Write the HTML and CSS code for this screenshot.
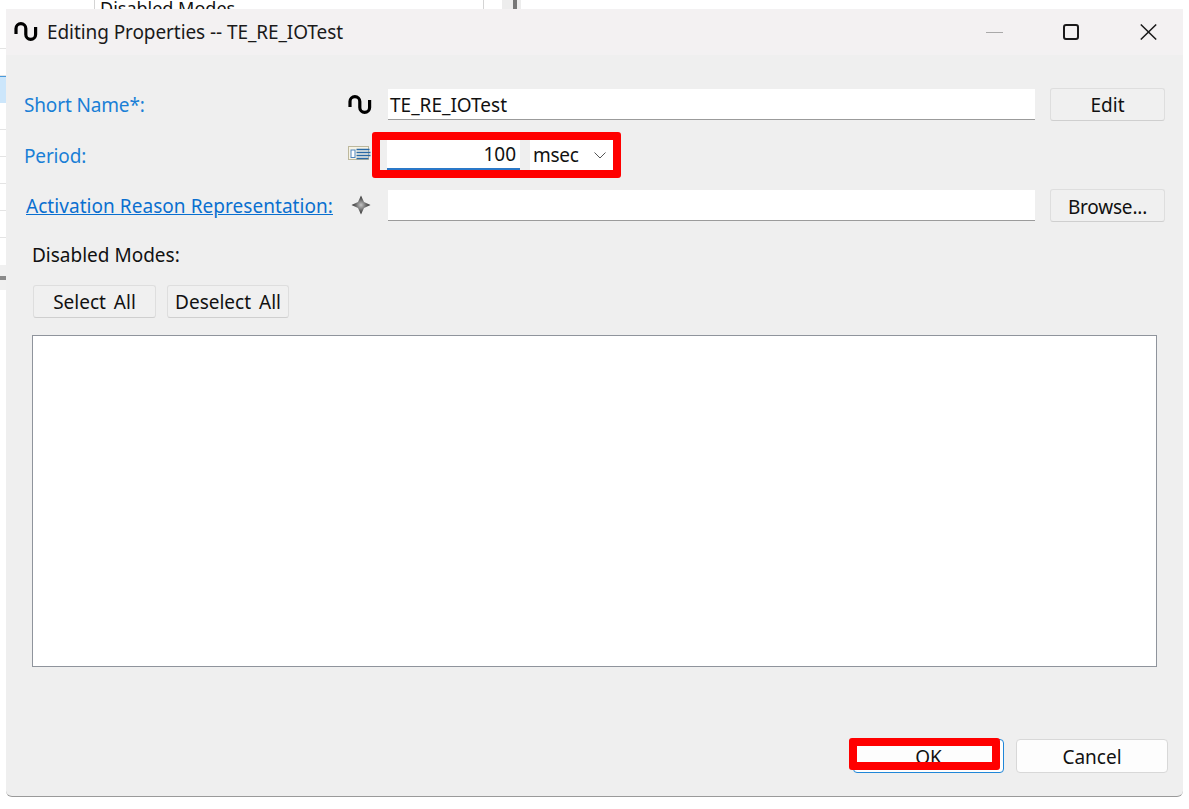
FILE: index.html
```html
<!DOCTYPE html>
<html lang="en">
<head>
<meta charset="utf-8">
<title>Editing Properties -- TE_RE_IOTest</title>
<link rel="stylesheet" href="styles.css">
</head>
<body>
<div class="backdrop">
  <div class="rail">
    <div class="rail-row"></div>
    <div class="rail-row"></div>
    <div class="rail-row rail-selected"></div>
    <div class="rail-row"></div>
    <div class="rail-row"></div>
    <div class="rail-row"></div>
    <div class="rail-row"></div>
    <div class="rail-row"></div>
    <div class="rail-split"></div>
  </div>
  <div class="back-cell">Disabled Modes</div>
  <div class="back-scroll"><div class="back-thumb"></div></div>
</div>

<section class="dialog">
  <header class="titlebar">
    <svg class="wave" viewBox="0 0 24 20"><path d="M2 12V6.500a4.900 4.900 0 0 1 9.800 0V12.500a4.900 4.900 0 0 0 9.800 0V5"/></svg>
    <h1 class="title">Editing Properties -- TE_RE_IOTest</h1>
    <div class="win-controls">
      <span class="win-min"></span>
      <span class="win-max"></span>
      <svg class="win-close" viewBox="0 0 17 16"><path d="M.8.5l15.400 15M16.200.5L.8 15.500"/></svg>
    </div>
  </header>

  <div class="form">
    <label class="label">Short Name*:</label>
    <svg class="wave" viewBox="0 0 24 20"><path d="M2 12V6.500a4.900 4.900 0 0 1 9.800 0V12.500a4.900 4.900 0 0 0 9.800 0V5"/></svg>
    <div class="field">TE_RE_IOTest</div>
    <button class="btn">Edit</button>

    <label class="label label-period">Period:</label>
    <svg class="list-icon" viewBox="0 0 23 15">
      <rect x=".5" y=".5" width="20" height="13" fill="#f6f3e6" stroke="#bdb89c"/>
      <rect x="3" y="4" width="4" height="7.500" fill="#fff" stroke="#4f86bd"/>
      <path d="M8.500 3.500h13M8.500 6.500h14M8.500 9.500h14M8.500 12.500h12" stroke="#2a6aa6" stroke-width="1.500"/>
    </svg>
    <div class="period">
      <div class="period-input">100</div>
      <div class="period-unit"><span class="unit-text">msec</span><svg class="chev" viewBox="0 0 12 7"><path d="M.5.5L6 6l5.500-5.500"/></svg></div>
    </div>
    <span></span>

    <a class="label link" href="#">Activation Reason Representation:</a>
    <svg class="star" viewBox="0 0 20 20">
      <defs><radialGradient id="starFill"><stop offset="0" stop-color="#c4c4c4"/><stop offset=".55" stop-color="#6a6a6a"/><stop offset="1" stop-color="#2e2e2e"/></radialGradient></defs>
      <path d="M10 .5L13 7 19.500 10 13 13 10 19.500 7 13 .5 10 7 7z" fill="url(#starFill)"/>
    </svg>
    <div class="field"></div>
    <button class="btn btn-browse">Browse...</button>
  </div>

  <div class="modes">
    <div class="modes-label">Disabled Modes:</div>
    <div class="modes-actions">
      <button class="btn btn-select">Select All</button>
      <button class="btn btn-deselect">Deselect All</button>
    </div>
    <div class="modes-list"></div>
  </div>

  <footer class="footer">
    <button class="action action-default">OK</button>
    <button class="action">Cancel</button>
  </footer>

  <div class="mark mark-period"></div>
  <div class="mark mark-ok"></div>
</section>
</body>
</html>
```
FILE: styles.css
```css
* { box-sizing: border-box; }
html, body { margin: 0; height: 100%; }
body {
  position: relative;
  overflow: hidden;
  background: #fff;
  font-family: "Noto Sans", "Open Sans", sans-serif;
  font-size: 19px;
  color: #111;
}

.backdrop { position: absolute; inset: 0; }
.rail { position: absolute; left: 0; top: 22px; width: 6px; }
.rail-row { height: 27px; border-bottom: 1px solid #e4e4e4; }
.rail-selected { background: #cce6fb; border-top: 1px solid #4a9bdc; border-bottom: 0; height: 27px; }
.rail-split { height: 25px; margin-top: 27px; background: #f0f0f0; padding-top: 11px; position: relative; }
.rail-split::after { content: ""; display: block; height: 4px; background: #8a8a8a; }
.back-cell {
  position: absolute; left: 94px; top: -4px; width: 390px; height: 14px;
  padding-left: 5px; border: 1px solid #d4d4d4; border-width: 0 1px;
  font-size: 18px; line-height: 24px; overflow: hidden;
}
.back-scroll { position: absolute; left: 502px; top: 0; width: 19px; height: 10px; background: #ededed; }
.back-thumb { width: 4px; height: 10px; margin-left: 11px; background: #777; }

.dialog {
  position: absolute; left: 6px; top: 9px; width: 1177px; height: 788px;
  display: flex; flex-direction: column;
  background: #efefef;
  border-bottom: 1px solid #9a9a9a;
  border-radius: 2px 2px 6px 6px;
}

.titlebar {
  display: flex; align-items: center; height: 46px; flex: none;
  padding-left: 8px; background: #f3f1f2;
}
.wave { width: 24px; height: 20px; }
.wave path { fill: none; stroke: #000; stroke-width: 3.2; }
.title { margin: 0 0 0 9px; font-size: 19px; font-weight: 400; letter-spacing: -.08px; color: #1a1a1a; }
.win-controls { display: flex; align-items: center; margin-left: auto; padding-right: 26px; }
.win-min { width: 17px; height: 1px; background: #a9a9a9; margin-right: 60px; }
.win-max { width: 16px; height: 16px; border: 2px solid #1a1a1a; border-radius: 3px; margin-right: 61px; }
.win-close { width: 17px; height: 16px; }
.win-close path { stroke: #1a1a1a; stroke-width: 1.5; fill: none; }

.form {
  display: grid; flex: none;
  grid-template-columns: 324px 40px 1fr 115px;
  grid-template-rows: 33px 34px 33px;
  row-gap: 17px; align-items: center;
  padding: 33px 18px 0;
}
.label { color: #1a7fd6; letter-spacing: -.15px; }
.label-period { padding-top: 2px; }
.link { margin-left: 2px; color: #0a6fd0; text-decoration: underline; letter-spacing: .05px; white-space: nowrap; }
.field {
  height: 31px; margin-right: 15px; padding-left: 2px; background: #fff;
  border-bottom: 1px solid #9b9b9b; line-height: 32px; color: #111;
}
.btn {
  height: 100%; padding: 0; font: inherit; color: #111;
  background: #f0f0f0; border: 1px solid #dedede; border-bottom-color: #cfcfcf; border-radius: 3px;
}
.btn-browse { padding-top: 2px; letter-spacing: -.2px; }
.list-icon { width: 23px; height: 15px; margin-bottom: 3px; }
.star { width: 20px; height: 20px; margin: 0 0 1px 3px; }
.period { display: flex; gap: 10px; height: 30px; margin-left: -1px; }
.period-input {
  width: 133px; padding-right: 4px; text-align: right; background: #fff;
  border-bottom: 2px solid #2a78c8; line-height: 29px;
}
.period-unit {
  display: flex; align-items: center; width: 85px; padding-left: 3px; background: #fff; line-height: 29px;
}
.unit-text { letter-spacing: -.3px; }
.chev { width: 12px; height: 7px; margin-left: 15px; }
.chev path { fill: none; stroke: #555; stroke-width: 1; }

.modes { flex: none; padding: 21px 26px 0; }
.modes-label { height: 24px; line-height: 24px; }
.modes-actions { display: flex; gap: 11px; height: 33px; margin: 18px 0 17px 1px; }
.btn-select { width: 123px; word-spacing: 3px; }
.btn-deselect { width: 122px; word-spacing: 3px; }
.modes-list { height: 332px; background: #fff; border: 1px solid #8f949c; }

.footer {
  display: flex; justify-content: flex-end; gap: 12px;
  margin-top: auto; padding: 0 15px 23px;
}
.action {
  width: 152px; height: 34px; padding: 1px 0 0; font: inherit; color: #111;
  background: #fdfdfd; border: 1px solid #d8d8d8; border-radius: 4px;
}
.action-default { width: 151px; border-color: #1f86d8; }

.mark { position: absolute; border: 8px solid #f00; border-radius: 3px; }
.mark-period { left: 366px; top: 123px; width: 249px; height: 46px; }
.mark-ok { left: 843px; top: 729px; width: 151px; height: 32px; }
```
